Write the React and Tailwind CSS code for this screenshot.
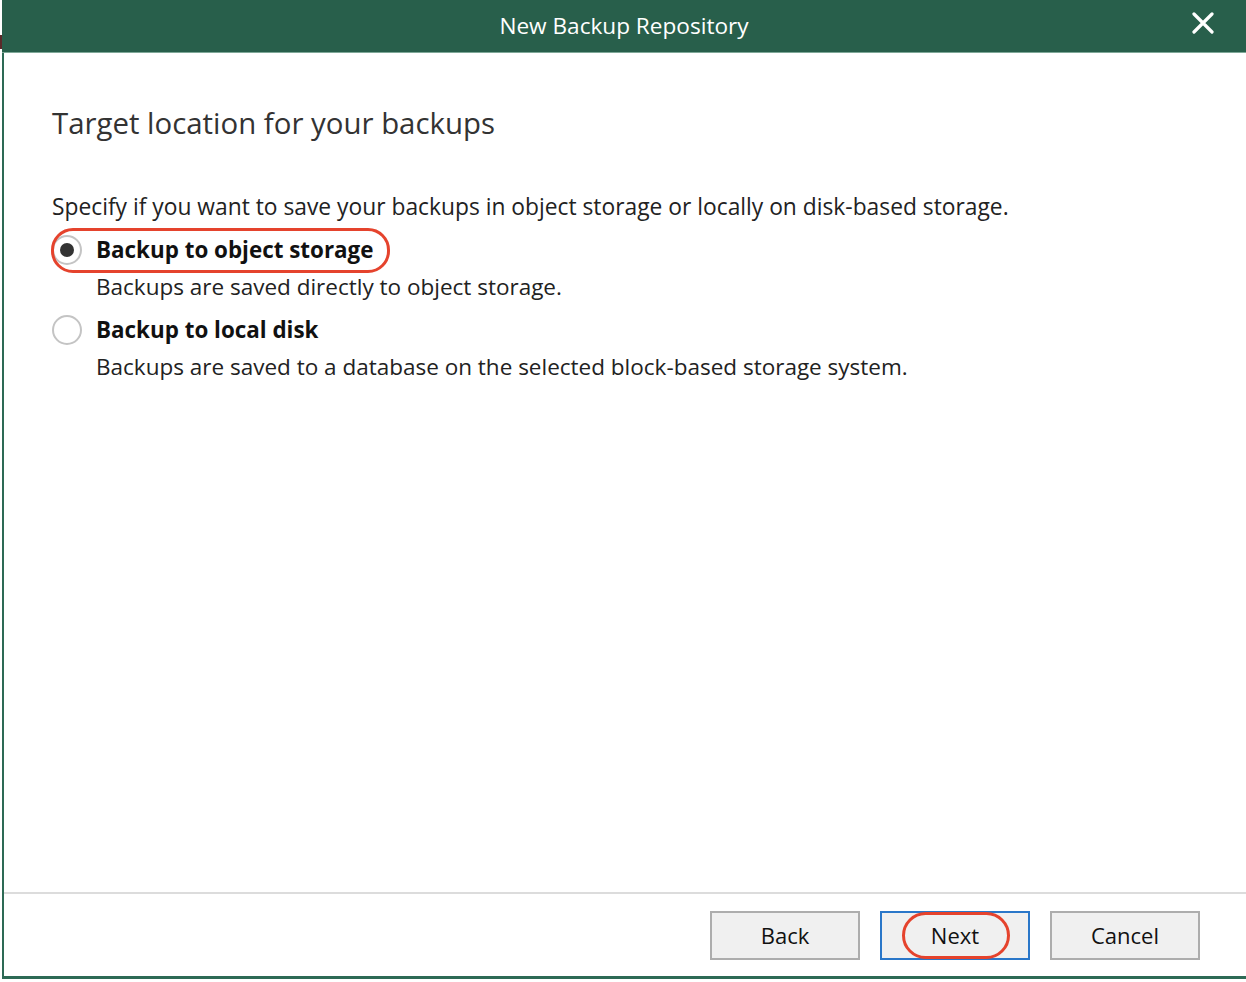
import React from "react";

const font = { fontFamily: '"Open Sans", "Noto Sans", sans-serif' };

function Radio({ checked }) {
  return (
    <span className="flex h-[30px] w-[30px] shrink-0 items-center justify-center rounded-full border-2 border-[#c4c4c4] bg-white">
      {checked && <span className="h-[14px] w-[14px] rounded-full bg-[#333333]" />}
    </span>
  );
}

function Option({ checked, label, desc }) {
  return (
    <div className="mb-[6px] flex flex-col">
      <div className="flex h-[40px] items-center gap-[14px]">
        <Radio checked={checked} />
        <span className="text-[22.4px] font-bold text-[#111]">{label}</span>
      </div>
      <div className="pl-[44px] text-[22.5px] leading-[34px] text-[#222]">{desc}</div>
    </div>
  );
}

function Button({ children, primary }) {
  return (
    <button
      className={
        "h-[49px] w-[150px] border-2 bg-[#f0f0f0] text-[22px] text-[#111] " +
        (primary ? "border-[#2a77c9]" : "border-[#adadad]")
      }
    >
      {children}
    </button>
  );
}

export default function App() {
  return (
    <div className="relative h-[982px] w-[1246px] overflow-hidden bg-white" style={font}>
      {/* stray mark left of the window */}
      <div className="absolute left-0 top-[35px] h-[14px] w-[2px] bg-[#5a2a2a]" />
      <div className="ml-[2px] flex h-[979px] w-[1244px] flex-col">
        <div className="relative flex h-[53px] shrink-0 items-center justify-center border-b border-[#7fa898] bg-[#285f4b]">
          <span className="text-[22.6px] text-white">New Backup Repository</span>
          <svg
            className="absolute right-[32px] top-[12px]"
            width="22"
            height="22"
            viewBox="0 0 22 22"
          >
            <path d="M2 2 L20 20 M20 2 L2 20" stroke="white" strokeWidth="3.2" strokeLinecap="round" />
          </svg>
        </div>
        <div className="flex flex-1 flex-col border-b-[3px] border-l-2 border-[#2d6a55]">
          <div className="flex flex-1 flex-col pl-[48px] pt-[50px]">
            <h1 className="text-[29.4px] leading-[40px] text-[#333]">
              Target location for your backups
            </h1>
            <p className="mt-[49px] text-[22.8px] leading-[30px] text-[#222]">
              Specify if you want to save your backups in object storage or locally on disk-based storage.
            </p>
            <div className="relative mt-[8px]">
              <Option
                checked
                label="Backup to object storage"
                desc="Backups are saved directly to object storage."
              />
              <Option
                label="Backup to local disk"
                desc="Backups are saved to a database on the selected block-based storage system."
              />
              <div className="absolute left-[-1px] top-[-2px] h-[45px] w-[339px] rounded-[22px] border-[3px] border-[#e5432d]" />
            </div>
          </div>
          <div className="h-[2px] bg-[#dcdcdc]" />
          <div className="flex h-[82px] items-start gap-[20px] pl-[706px] pt-[17px]">
            <Button>Back</Button>
            <div className="relative">
              <Button primary>Next</Button>
              <div className="absolute left-[22px] top-[1px] h-[47px] w-[108px] rounded-[24px] border-[3px] border-[#e5432d]" />
            </div>
            <Button>Cancel</Button>
          </div>
        </div>
      </div>
    </div>
  );
}
